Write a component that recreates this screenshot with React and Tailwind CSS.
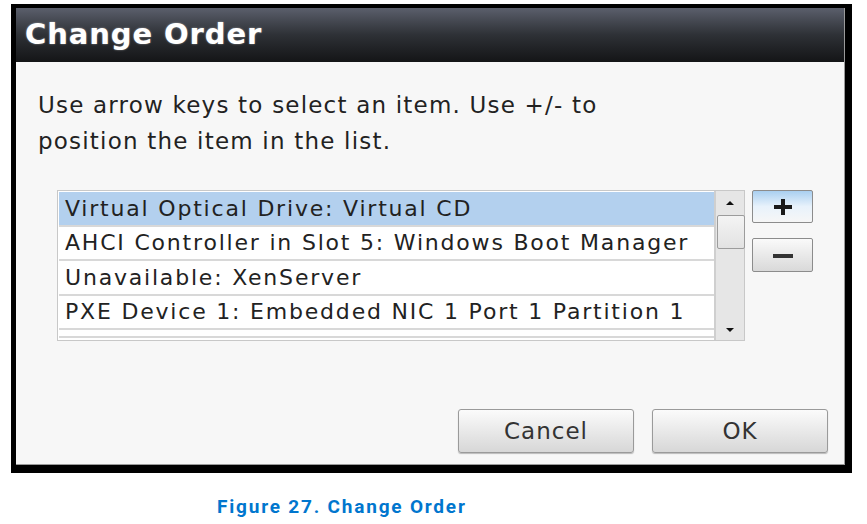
import React from "react";

const items = [
  "Virtual Optical Drive: Virtual CD",
  "AHCI Controller in Slot 5: Windows Boot Manager",
  "Unavailable: XenServer",
  "PXE Device 1: Embedded NIC 1 Port 1 Partition 1",
];

const App = () => {
  return (
    <div className="w-[867px] h-[524px] bg-white overflow-hidden" style={{ fontFamily: '"DejaVu Sans", Verdana, sans-serif' }}>
      <div className="ml-[11px] mt-[4px] w-[841px] h-[469px] bg-black pl-[5px] pt-[4px] pr-[7px] pb-[8px]">
        <div className="w-full h-full flex flex-col bg-[#f7f7f7] border-r border-b border-[#9a9a9a]">
          <div className="h-[54px] shrink-0 flex items-center pl-[9px] bg-gradient-to-b from-[#5b5f6c] via-[#2e3136] to-[#141517]">
            <h1 className="text-white text-[29px] font-bold tracking-[0.9px] [text-shadow:0_0_2px_rgba(255,255,255,0.5)]">Change Order</h1>
          </div>

          <div className="pl-[22px] pt-[25px] text-[23px] leading-[36px] tracking-[1.2px] text-[#222]">
            <p>Use arrow keys to select an item. Use +/- to</p>
            <p>position the item in the list.</p>
          </div>

          <div className="flex ml-[41px] mt-[31px] gap-[7px]">
            <div className="flex w-[688px] h-[151px] border border-[#c8c8c8] bg-white">
              <div className="flex-1 flex flex-col pl-[1px] pt-[1px] overflow-hidden">
                {items.map((t, i) => (
                  <div
                    key={t}
                    className={`h-[34.5px] shrink-0 flex items-center pl-[6px] text-[22px] tracking-[1.8px] whitespace-nowrap text-[#222] border-b-2 border-[#d8d8d8] ${
                      i === 0 ? "bg-[#b3d0ee]" : "bg-white"
                    }`}
                  >
                    {t}
                  </div>
                ))}
                <div className="h-[8px] border-b-2 border-[#d8d8d8]"></div>
              </div>
              <div className="w-[30px] shrink-0 flex flex-col items-center bg-[#e6e6e6] border-l-2 border-[#cfcfcf]">
                <div className="h-[24px] w-full flex items-center justify-center">
                  <div className="w-0 h-0 border-l-[4px] border-r-[4px] border-b-[4px] border-l-transparent border-r-transparent border-b-[#111]"></div>
                </div>
                <div className="w-[28px] ml-[2px] h-[34px] bg-gradient-to-b from-[#f4f4f4] to-[#e2e2e2] border border-[#9c9c9c] rounded-[2px]"></div>
                <div className="flex-1"></div>
                <div className="h-[20px] w-full flex items-center justify-center">
                  <div className="w-0 h-0 border-l-[4px] border-r-[4px] border-t-[4px] border-l-transparent border-r-transparent border-t-[#111]"></div>
                </div>
              </div>
            </div>

            <div className="flex flex-col gap-[15px]">
              <button className="w-[61px] h-[33px] flex items-center justify-center rounded-[2px] border border-[#8c8c8c] bg-gradient-to-b from-[#a9cff0] via-[#e8f2fb] to-[#f6f6f6]">
                <svg width="26" height="22" viewBox="0 0 26 22">
                  <path d="M13 3v16M4 11h18" stroke="#1a1a1a" strokeWidth="4" />
                </svg>
              </button>
              <button className="w-[61px] h-[34px] flex items-center justify-center rounded-[2px] border border-[#8c8c8c] bg-gradient-to-b from-[#fafafa] to-[#d9d9d9]">
                <svg width="26" height="22" viewBox="0 0 26 22">
                  <path d="M3 12h20" stroke="#333" strokeWidth="4" />
                </svg>
              </button>
            </div>
          </div>

          <div className="flex-1"></div>

          <div className="flex justify-end gap-[18px] pr-[16px] pb-[11px]">
            <button className="w-[176px] h-[44px] rounded-[3px] border border-[#9a9a9a] bg-gradient-to-b from-[#fbfbfb] to-[#d7d7d7] text-[23px] tracking-[1px] text-[#333] shadow-[0_1px_1px_rgba(0,0,0,0.25)]">
              Cancel
            </button>
            <button className="w-[176px] h-[44px] rounded-[3px] border border-[#9a9a9a] bg-gradient-to-b from-[#fbfbfb] to-[#d7d7d7] text-[23px] tracking-[1px] text-[#333] shadow-[0_1px_1px_rgba(0,0,0,0.25)]">
              OK
            </button>
          </div>
        </div>
      </div>

      <p className="mt-[20px] pl-[217px] text-[19px] font-bold text-[#0076ce] tracking-[1.8px]" style={{ fontFamily: "Roboto, Inter, sans-serif" }}>
        Figure 27. Change Order
      </p>
    </div>
  );
};

export default App;
